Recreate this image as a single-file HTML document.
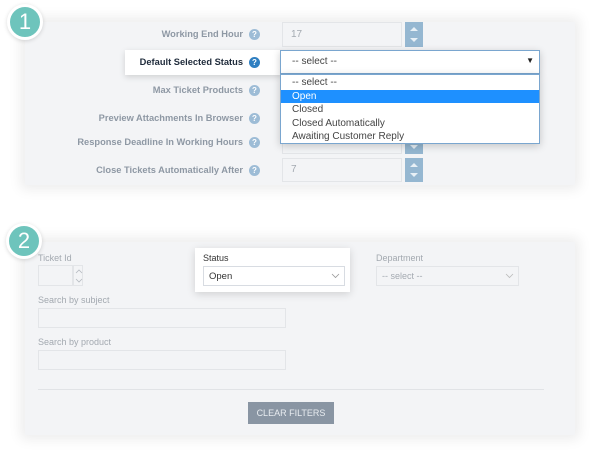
<!DOCTYPE html><html><head><style>
*{margin:0;padding:0;box-sizing:border-box}
body{width:600px;height:457px;background:#fff;font-family:"Liberation Sans",sans-serif;position:relative;overflow:hidden}
.a{position:absolute}
.panel{background:#f3f4f6;box-shadow:0 0 12px 4px rgba(0,0,0,.08)}
.badge{border-radius:50%;background:#6ec4bc;border:3px solid #fff;color:#fff;font-size:22px;text-align:center;box-shadow:0 1px 4px rgba(0,0,0,.15)}
.lbl{font-size:9.3px;font-weight:bold;color:#8e98a4;text-align:right;width:240px;left:3px}
.q{width:11px;height:11px;border-radius:50%;background:#9dbcd6;color:#fff;font-size:8px;font-weight:bold;text-align:center;line-height:11px}
.inp{background:#f3f4f6;border:1px solid #e3e5e8;font-size:10px;color:#a4aab1;padding-left:8px}
.spin{background:#95b7d1;width:18px}
.spin:before{content:"";position:absolute;left:5px;top:5px;border:4px solid transparent;border-bottom:4px solid #e8f0f6;border-top:0}
.spin:after{content:"";position:absolute;left:5px;bottom:5px;border:4px solid transparent;border-top:4px solid #e8f0f6;border-bottom:0}
.l2{font-size:9px;color:#a3a9b0}
.opt{font-size:10px;color:#444;padding-left:11px;height:13.6px;line-height:13.6px}
</style></head><body>
<div class="a panel" style="left:25px;top:22px;width:550px;height:163px"></div>
<div class="a lbl" style="top:29px">Working End Hour</div><div class="a q" style="left:249px;top:29px">?</div>
<div class="a inp" style="left:282px;top:22px;width:120px;height:25px;line-height:23px">17</div><div class="a spin" style="left:405px;top:22px;height:25px"></div>
<div class="a lbl" style="top:85px">Max Ticket Products</div><div class="a q" style="left:249px;top:85px">?</div>
<div class="a lbl" style="top:113px">Preview Attachments In Browser</div><div class="a q" style="left:249px;top:113px">?</div>
<div class="a lbl" style="top:137px">Response Deadline In Working Hours</div><div class="a q" style="left:249px;top:137px">?</div>
<div class="a inp" style="left:282px;top:130px;width:120px;height:24px"></div><div class="a spin" style="left:405px;top:130px;height:24px"></div>
<div class="a lbl" style="top:165px">Close Tickets Automatically After</div><div class="a q" style="left:249px;top:165px">?</div>
<div class="a inp" style="left:282px;top:158px;width:120px;height:24px;line-height:22px">7</div><div class="a spin" style="left:405px;top:158px;height:24px"></div>
<div class="a" style="left:125px;top:50px;width:156px;height:25px;background:#fff;box-shadow:0 2px 6px rgba(0,0,0,.15)"></div>
<div class="a lbl" style="top:57px;color:#1e2a3a">Default Selected Status</div>
<div class="a q" style="left:249px;top:57px;background:#2f7fc1">?</div>
<div class="a" style="left:280px;top:50px;width:260px;height:24px;background:#fff;border:1px solid #7aa6cf;box-shadow:0 2px 8px rgba(0,0,0,.2)"><span class="a" style="left:11px;top:5px;font-size:10px;color:#444">-- select --</span><span class="a" style="right:5px;top:5px;font-size:8px;color:#222">▼</span></div>
<div class="a" style="left:280px;top:74px;width:260px;height:70px;background:#fff;border:1px solid #7aa6cf;box-shadow:0 2px 8px rgba(0,0,0,.2);padding-top:1px">
<div class="opt">-- select --</div><div class="opt" style="background:#1e90ff;color:#fff">Open</div><div class="opt">Closed</div><div class="opt">Closed Automatically</div><div class="opt">Awaiting Customer Reply</div></div>
<div class="a badge" style="left:7px;top:4px;width:36px;height:36px;line-height:30px">1</div>

<div class="a panel" style="left:25px;top:242px;width:550px;height:193px"></div>
<div class="a l2" style="left:38px;top:253px">Ticket Id</div>
<div class="a inp" style="left:38px;top:265px;width:35px;height:21px"></div>
<div class="a inp" style="left:73px;top:265px;width:10px;height:21px;padding:0">
<svg class="a" style="left:1px;top:2px" width="8" height="16"><path d="M1 5 L4 2 L7 5 M1 11 L4 14 L7 11" fill="none" stroke="#b5bac0" stroke-width="0.8"/></svg></div>
<div class="a" style="left:195px;top:248px;width:155px;height:44px;background:#fff;box-shadow:0 2px 8px rgba(0,0,0,.15)"></div>
<div class="a" style="left:203px;top:253px;font-size:9px;color:#333">Status</div>
<div class="a" style="left:203px;top:266px;width:142px;height:20px;border:1px solid #d8dce2;font-size:9.5px;color:#333;padding:4px 0 0 5px">Open<svg class="a" style="right:4px;top:6px" width="9" height="6"><path d="M1 1 L4.5 4.5 L8 1" fill="none" stroke="#999" stroke-width="0.8"/></svg></div>
<div class="a l2" style="left:376px;top:253px">Department</div>
<div class="a inp" style="left:376px;top:266px;width:143px;height:20px;font-size:9px;padding:4px 0 0 5px">-- select --<svg class="a" style="right:4px;top:6px" width="9" height="6"><path d="M1 1 L4.5 4.5 L8 1" fill="none" stroke="#bbb" stroke-width="0.8"/></svg></div>
<div class="a l2" style="left:38px;top:295px">Search by subject</div>
<div class="a inp" style="left:38px;top:308px;width:248px;height:20px"></div>
<div class="a l2" style="left:38px;top:337px">Search by product</div>
<div class="a inp" style="left:38px;top:350px;width:248px;height:20px"></div>
<div class="a" style="left:38px;top:389px;width:506px;height:1px;background:#e1e3e6"></div>
<div class="a" style="left:248px;top:402px;width:86px;height:22px;background:#8995a3;color:#e8ecf0;font-size:9px;text-align:center;line-height:22px">CLEAR FILTERS</div>
<div class="a badge" style="left:6px;top:223px;width:36px;height:36px;line-height:30px">2</div>
</body></html>
